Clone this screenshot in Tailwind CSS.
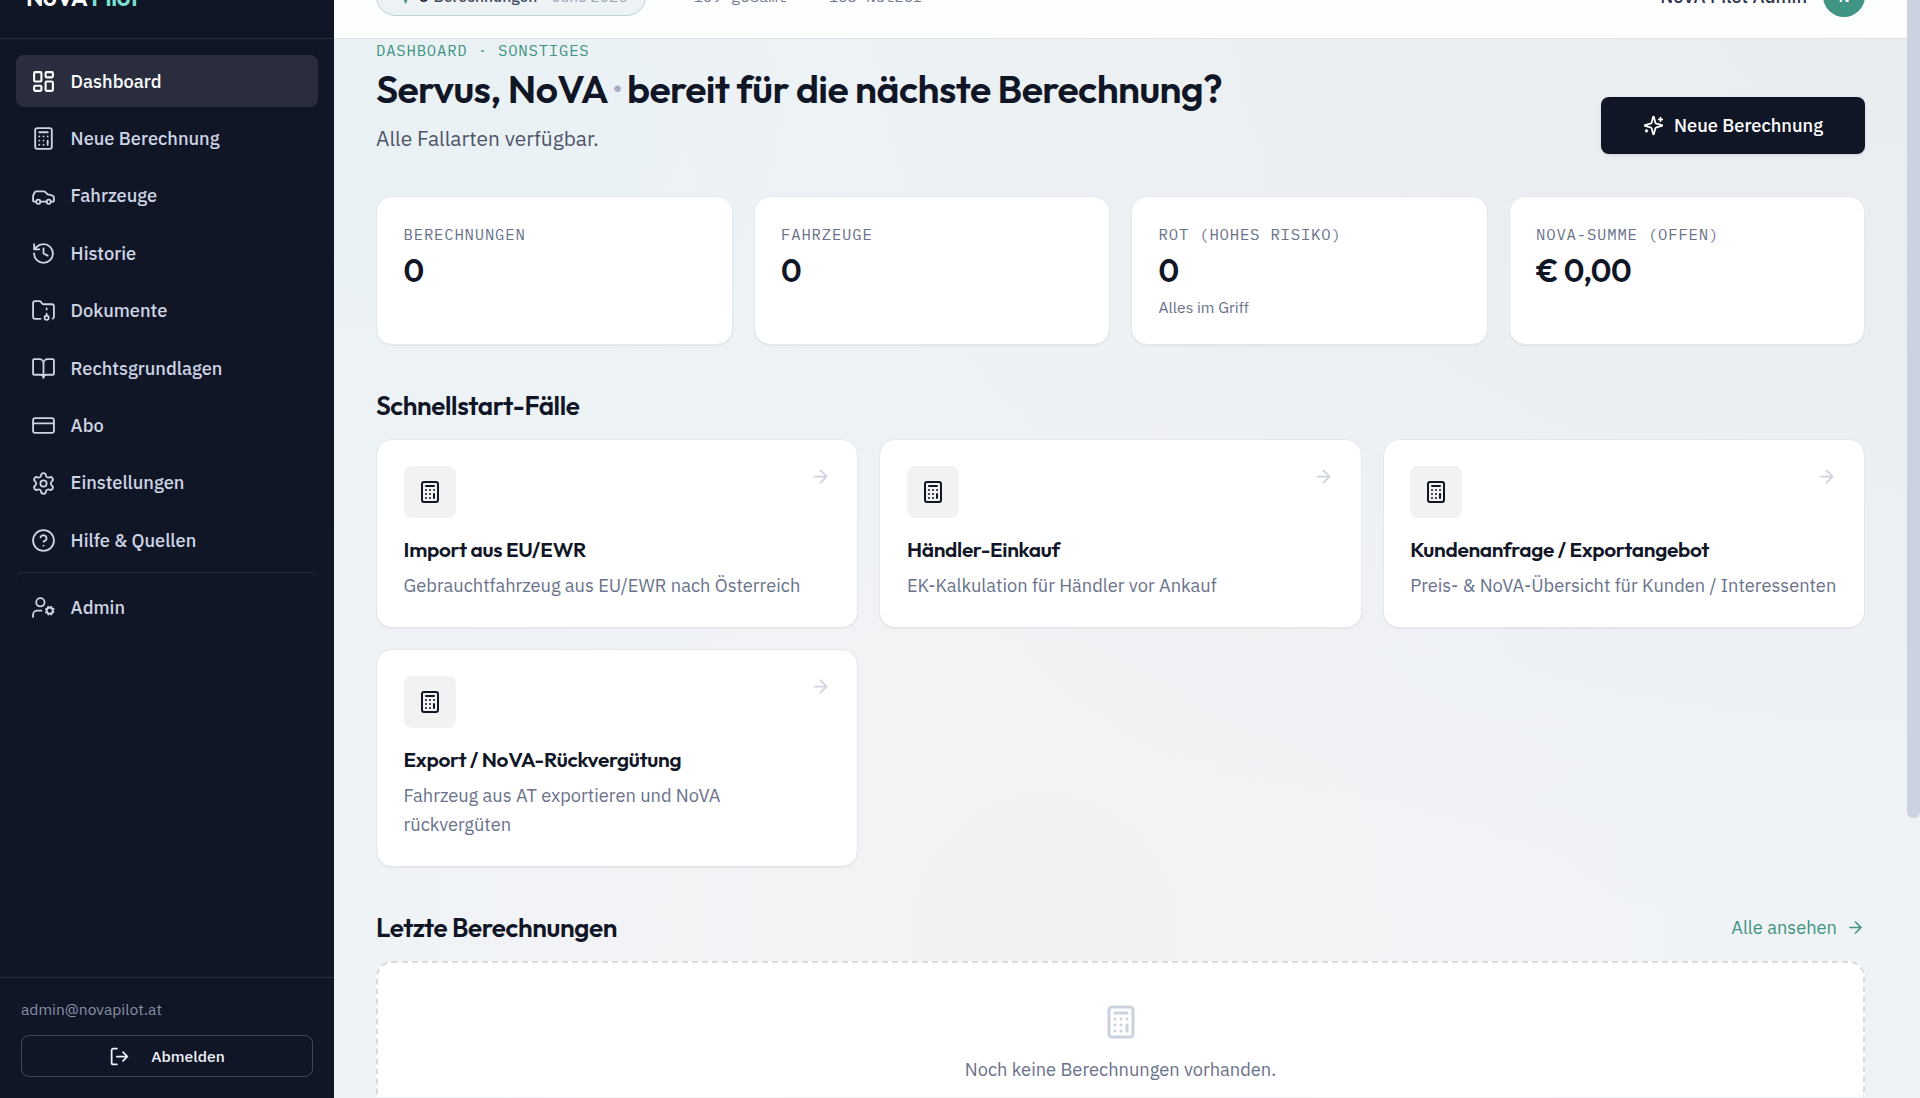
<!DOCTYPE html>
<html lang="de">
<head>
    <meta charset="UTF-8">
    <meta name="viewport" content="width=device-width, initial-scale=1.0">
    <title>Dashboard - NoVA Pilot</title>
    <script src="https://cdn.jsdelivr.net/npm/@tailwindcss/browser@4"></script>
</head>
<body class="h-screen overflow-hidden font-['IBM_Plex_Sans','Open_Sans',sans-serif] text-[18.28px] text-[#111627]">
    <!-- Icons -->
    <svg class="hidden">
        <symbol id="dashboard" viewBox="0 0 24 24"><rect width="7" height="9" x="3" y="3" rx="1"/><rect width="7" height="5" x="14" y="3" rx="1"/><rect width="7" height="9" x="14" y="12" rx="1"/><rect width="7" height="5" x="3" y="16" rx="1"/></symbol>
        <symbol id="calculator" viewBox="0 0 24 24"><rect width="16" height="20" x="4" y="2" rx="2"/><path d="M8 6h8M16 14v4M16 10h.01M12 10h.01M8 10h.01M12 14h.01M8 14h.01M12 18h.01M8 18h.01"/></symbol>
        <symbol id="car" viewBox="0 0 24 24"><path d="M19 17h2c.6 0 1-.4 1-1v-3c0-.9-.7-1.7-1.5-1.9C18.7 10.6 16 10 16 10s-1.3-1.4-2.2-2.3c-.5-.4-1.1-.7-1.8-.7H5c-.6 0-1.1.4-1.4.9l-1.4 2.9A3.7 3.7 0 0 0 2 12v4c0 .6.4 1 1 1h2M9 17h6"/><circle cx="7" cy="17" r="2"/><circle cx="17" cy="17" r="2"/></symbol>
        <symbol id="history" viewBox="0 0 24 24"><path d="M3 12a9 9 0 1 0 9-9 9.75 9.75 0 0 0-6.74 2.74L3 8M3 3v5h5M12 7v5l4 2"/></symbol>
        <symbol id="folder" viewBox="0 0 24 24"><circle cx="15" cy="19" r="2"/><path d="M20.9 19.8A2 2 0 0 0 22 18V8a2 2 0 0 0-2-2h-7.9a2 2 0 0 1-1.69-.9L9.6 3.9A2 2 0 0 0 7.93 3H4a2 2 0 0 0-2 2v13a2 2 0 0 0 2 2h5.1M15 11v-1M15 17v-2"/></symbol>
        <symbol id="book" viewBox="0 0 24 24"><path d="M12 7v14M3 18a1 1 0 0 1-1-1V4a1 1 0 0 1 1-1h5a4 4 0 0 1 4 4 4 4 0 0 1 4-4h5a1 1 0 0 1 1 1v13a1 1 0 0 1-1 1h-6a3 3 0 0 0-3 3 3 3 0 0 0-3-3z"/></symbol>
        <symbol id="card" viewBox="0 0 24 24"><rect width="20" height="14" x="2" y="5" rx="2"/><path d="M2 10h20"/></symbol>
        <symbol id="settings" viewBox="0 0 24 24"><path d="M9.671 4.136a2.34 2.34 0 0 1 4.659 0 2.34 2.34 0 0 0 3.319 1.915 2.34 2.34 0 0 1 2.33 4.033 2.34 2.34 0 0 0 0 3.831 2.34 2.34 0 0 1-2.33 4.033 2.34 2.34 0 0 0-3.319 1.915 2.34 2.34 0 0 1-4.659 0 2.34 2.34 0 0 0-3.32-1.915 2.34 2.34 0 0 1-2.33-4.033 2.34 2.34 0 0 0 0-3.831A2.34 2.34 0 0 1 6.35 6.051a2.34 2.34 0 0 0 3.319-1.915"/><circle cx="12" cy="12" r="3"/></symbol>
        <symbol id="help" viewBox="0 0 24 24"><circle cx="12" cy="12" r="10"/><path d="M9.09 9a3 3 0 0 1 5.83 1c0 2-3 3-3 3M12 17h.01"/></symbol>
        <symbol id="user-cog" viewBox="0 0 24 24"><path d="M10 15H6a4 4 0 0 0-4 4v2M21.7 16.4l-.9-.3M15.2 13.9l-.9-.3M16.6 18.7l.3-.9M19.1 12.2l.3-.9M19.6 18.7l-.4-1M16.8 12.3l-.4-1M14.3 16.6l1-.4M20.7 13.8l1-.4"/><circle cx="18" cy="15" r="3"/><circle cx="9" cy="7" r="4"/></symbol>
        <symbol id="logout" viewBox="0 0 24 24"><path d="m16 17 5-5-5-5M21 12H9M9 21H5a2 2 0 0 1-2-2V5a2 2 0 0 1 2-2h4"/></symbol>
        <symbol id="sparkles" viewBox="0 0 24 24"><path d="M9.937 15.5A2 2 0 0 0 8.5 14.063l-6.135-1.582a.5.5 0 0 1 0-.962L8.5 9.936A2 2 0 0 0 9.937 8.5l1.582-6.135a.5.5 0 0 1 .963 0L14.063 8.5A2 2 0 0 0 15.5 9.937l6.135 1.581a.5.5 0 0 1 0 .964L15.5 14.063a2 2 0 0 0-1.437 1.437l-1.582 6.135a.5.5 0 0 1-.963 0zM20 3v4M22 5h-4M4 17v2M5 18H3"/></symbol>
        <symbol id="arrow" viewBox="0 0 24 24"><path d="M5 12h14M12 5l7 7-7 7"/></symbol>
        <symbol id="activity" viewBox="0 0 24 24"><path d="M22 12h-4l-3 9L9 3l-3 9H2"/></symbol>
    </svg>

    <div class="flex h-full">
        <!-- Sidebar -->
        <aside class="flex w-[334px] shrink-0 flex-col bg-[#111627]">
            <div class="-mt-[46px] flex h-[85px] shrink-0 items-center border-b border-white/10 px-[26px] pt-[2px]">
                <span class="font-['Outfit',Lato,sans-serif] text-[24px] font-semibold tracking-[-0.015em] text-white">NoVA <span class="text-[#7ce0d0]">Pilot</span></span>
            </div>

            <nav class="flex flex-1 flex-col gap-[5.4px] px-4 pt-[16.3px] font-medium text-[#cdd4e3]">
                <a href="#" class="flex h-[52px] items-center gap-[14.6px] rounded-lg bg-white/10 px-[15px] text-white"><svg class="size-[25px] fill-none stroke-current stroke-2" stroke-linecap="round" stroke-linejoin="round"><use href="#dashboard"/></svg>Dashboard</a>
                <a href="#" class="flex h-[52px] items-center gap-[14.6px] rounded-lg px-[15px]"><svg class="size-[25px] fill-none stroke-current stroke-[1.75]" stroke-linecap="round" stroke-linejoin="round"><use href="#calculator"/></svg>Neue Berechnung</a>
                <a href="#" class="flex h-[52px] items-center gap-[14.6px] rounded-lg px-[15px]"><svg class="size-[25px] fill-none stroke-current stroke-[1.75]" stroke-linecap="round" stroke-linejoin="round"><use href="#car"/></svg>Fahrzeuge</a>
                <a href="#" class="flex h-[52px] items-center gap-[14.6px] rounded-lg px-[15px]"><svg class="size-[25px] fill-none stroke-current stroke-[1.75]" stroke-linecap="round" stroke-linejoin="round"><use href="#history"/></svg>Historie</a>
                <a href="#" class="flex h-[52px] items-center gap-[14.6px] rounded-lg px-[15px]"><svg class="size-[25px] fill-none stroke-current stroke-[1.75]" stroke-linecap="round" stroke-linejoin="round"><use href="#folder"/></svg>Dokumente</a>
                <a href="#" class="flex h-[52px] items-center gap-[14.6px] rounded-lg px-[15px]"><svg class="size-[25px] fill-none stroke-current stroke-[1.75]" stroke-linecap="round" stroke-linejoin="round"><use href="#book"/></svg>Rechtsgrundlagen</a>
                <a href="#" class="flex h-[52px] items-center gap-[14.6px] rounded-lg px-[15px]"><svg class="size-[25px] fill-none stroke-current stroke-[1.75]" stroke-linecap="round" stroke-linejoin="round"><use href="#card"/></svg>Abo</a>
                <a href="#" class="flex h-[52px] items-center gap-[14.6px] rounded-lg px-[15px]"><svg class="size-[25px] fill-none stroke-current stroke-[1.75]" stroke-linecap="round" stroke-linejoin="round"><use href="#settings"/></svg>Einstellungen</a>
                <a href="#" class="flex h-[52px] items-center gap-[14.6px] rounded-lg px-[15px]"><svg class="size-[25px] fill-none stroke-current stroke-[1.75]" stroke-linecap="round" stroke-linejoin="round"><use href="#help"/></svg>Hilfe &amp; Quellen</a>
                <a href="#" class="flex h-[61px] items-center gap-[14.6px] rounded-lg border-t border-white/10 px-[15px] pt-[9px]"><svg class="size-[25px] fill-none stroke-current stroke-[1.75]" stroke-linecap="round" stroke-linejoin="round"><use href="#user-cog"/></svg>Admin</a>
            </nav>

            <div class="h-[121px] border-t border-white/10 px-[21px] pt-[19px]">
                <p class="text-[15.65px] leading-[24px] text-[#8790a5]">admin@novapilot.at</p>
                <button class="mt-[14px] flex h-[42px] w-full items-center justify-center gap-[21px] rounded-lg border border-white/20 pt-px text-[15.65px] font-medium text-[#eef1f7]">
                    <svg class="size-[21px] fill-none stroke-current stroke-2" stroke-linecap="round" stroke-linejoin="round"><use href="#logout"/></svg>Abmelden
                </button>
            </div>
        </aside>

        <!-- Content column -->
        <div class="flex min-w-0 flex-1 flex-col bg-[#f0f3f6] bg-[radial-gradient(ellipse_at_0%_10%,#e9f1f4_0%,transparent_45%),radial-gradient(ellipse_at_100%_0%,#e8ecef_0%,transparent_60%),radial-gradient(ellipse_at_45%_85%,#f2f2f4_0%,transparent_55%)]">
            <header class="-mt-[46px] flex h-[85px] shrink-0 items-center justify-between border-b border-[#dfe4e8] bg-[#fdfefe] pr-[55px] pl-[42px]">
                <div class="flex items-center">
                    <div class="flex h-[39px] w-[270px] items-center rounded-full border border-[#b9d6d1] bg-[#edf3f4] pt-px pl-[18px] text-[15.65px] whitespace-nowrap">
                        <svg class="mr-[7px] size-[17px] fill-none stroke-[#3f9483] stroke-2" stroke-linecap="round" stroke-linejoin="round"><use href="#activity"/></svg>
                        <b class="mr-[5px] font-semibold">6</b><span class="font-medium text-[#454c62]">Berechnungen</span>
                        <span class="ml-[15px] text-[#9aa3b5]">June 2026</span>
                    </div>
                    <div class="flex items-center pt-[2px] font-['IBM_Plex_Mono','Liberation_Mono',monospace] text-[15.65px] whitespace-pre text-[#6f788e]"><span class="ml-[18px] text-[#b9c0cd]">·</span><span class="ml-[20px]">169 gesamt</span><span class="ml-[16px] text-[#b9c0cd]">·</span><span class="ml-[16px]">163 Nutzer</span></div>
                </div>
                <div class="flex items-center gap-4">
                    <span class="pt-px font-medium text-[#30364b]">NoVA Pilot Admin</span>
                    <span class="flex size-[42px] items-center justify-center rounded-full bg-[#3f9483] pt-px text-[15.65px] font-semibold text-white">N</span>
                </div>
            </header>

            <main class="flex flex-1 pl-[42px]">
                <div class="w-[1489px] shrink-0">
                    <div class="flex items-end justify-between">
                        <div>
                            <p class="font-['IBM_Plex_Mono','Liberation_Mono',monospace] text-[15.65px] leading-[22px] tracking-wider text-[#3f9483]">DASHBOARD · SONSTIGES</p>
                            <h1 class="mt-[5px] font-['Outfit',Lato,sans-serif] text-[39.15px] leading-[45px] font-semibold tracking-[-0.015em]">Servus, NoVA<span class="mr-[7px] ml-[6px] text-[#a6abc4]">·</span>bereit für die nächste Berechnung?</h1>
                            <p class="mt-[12px] text-[20.9px] leading-[31px] text-[#4d546a]">Alle Fallarten verfügbar.</p>
                        </div>
                        <button class="flex h-[57px] w-[264px] items-center justify-center gap-[10px] rounded-lg bg-[#111627] font-medium text-white shadow-sm">
                            <svg class="size-[21px] fill-none stroke-current stroke-2" stroke-linecap="round" stroke-linejoin="round"><use href="#sparkles"/></svg>Neue Berechnung
                        </button>
                    </div>

                    <!-- Key figures -->
                    <div class="mt-[42px] grid grid-cols-4 gap-[21px]">
                        <div class="h-[149px] rounded-2xl border border-[#e4e7ed] bg-white px-[26.6px] pt-[26px] shadow-2xs">
                            <p class="font-['IBM_Plex_Mono','Liberation_Mono',monospace] text-[15.65px] leading-[22px] tracking-wider text-[#69728a]">BERECHNUNGEN</p>
                            <p class="mt-[5px] font-['Outfit',Lato,sans-serif] text-[31.25px] leading-[42px] font-semibold tracking-[-0.015em]">0</p>
                        </div>
                        <div class="h-[149px] rounded-2xl border border-[#e4e7ed] bg-white px-[26.6px] pt-[26px] shadow-2xs">
                            <p class="font-['IBM_Plex_Mono','Liberation_Mono',monospace] text-[15.65px] leading-[22px] tracking-wider text-[#69728a]">FAHRZEUGE</p>
                            <p class="mt-[5px] font-['Outfit',Lato,sans-serif] text-[31.25px] leading-[42px] font-semibold tracking-[-0.015em]">0</p>
                        </div>
                        <div class="h-[149px] rounded-2xl border border-[#e4e7ed] bg-white px-[26.6px] pt-[26px] shadow-2xs">
                            <p class="font-['IBM_Plex_Mono','Liberation_Mono',monospace] text-[15.65px] leading-[22px] tracking-wider text-[#69728a]">ROT (HOHES RISIKO)</p>
                            <p class="mt-[5px] font-['Outfit',Lato,sans-serif] text-[31.25px] leading-[42px] font-semibold tracking-[-0.015em]">0</p>
                            <p class="mt-1 text-[15.65px] leading-[22px] text-[#69728a]">Alles im Griff</p>
                        </div>
                        <div class="h-[149px] rounded-2xl border border-[#e4e7ed] bg-white px-[26.6px] pt-[26px] shadow-2xs">
                            <p class="font-['IBM_Plex_Mono','Liberation_Mono',monospace] text-[15.65px] leading-[22px] tracking-wider text-[#69728a]">NOVA-SUMME (OFFEN)</p>
                            <p class="mt-[5px] font-['Outfit',Lato,sans-serif] text-[31.25px] leading-[42px] font-semibold tracking-[-0.015em]">€ 0,00</p>
                        </div>
                    </div>

                    <!-- Quick start -->
                    <h2 class="mt-[43px] font-['Outfit',Lato,sans-serif] text-[26.1px] leading-[36px] font-semibold tracking-[-0.015em]">Schnellstart-Fälle</h2>
                    <div class="mt-[15px] grid grid-cols-3 gap-[21px]">
                        <a href="#" class="h-[189px] rounded-2xl border border-[#e4e7ed] bg-white px-[26.6px] pt-[26px] shadow-2xs">
                            <div class="flex items-start justify-between">
                                <span class="flex size-[52px] items-center justify-center rounded-lg bg-[#f2f2f3]"><svg class="size-6 fill-none stroke-current stroke-2" stroke-linecap="round" stroke-linejoin="round"><use href="#calculator"/></svg></span>
                                <svg class="size-[21px] fill-none stroke-[#cdd2dc] stroke-2" stroke-linecap="round" stroke-linejoin="round"><use href="#arrow"/></svg>
                            </div>
                            <h3 class="mt-[17px] font-['Outfit',Lato,sans-serif] text-[20.9px] leading-[29px] font-semibold tracking-[-0.015em]">Import aus EU/EWR</h3>
                            <p class="mt-[7px] leading-[29.4px] text-[#69728a]">Gebrauchtfahrzeug aus EU/EWR nach Österreich</p>
                        </a>
                        <a href="#" class="h-[189px] rounded-2xl border border-[#e4e7ed] bg-white px-[26.6px] pt-[26px] shadow-2xs">
                            <div class="flex items-start justify-between">
                                <span class="flex size-[52px] items-center justify-center rounded-lg bg-[#f2f2f3]"><svg class="size-6 fill-none stroke-current stroke-2" stroke-linecap="round" stroke-linejoin="round"><use href="#calculator"/></svg></span>
                                <svg class="size-[21px] fill-none stroke-[#cdd2dc] stroke-2" stroke-linecap="round" stroke-linejoin="round"><use href="#arrow"/></svg>
                            </div>
                            <h3 class="mt-[17px] font-['Outfit',Lato,sans-serif] text-[20.9px] leading-[29px] font-semibold tracking-[-0.015em]">Händler-Einkauf</h3>
                            <p class="mt-[7px] leading-[29.4px] text-[#69728a]">EK-Kalkulation für Händler vor Ankauf</p>
                        </a>
                        <a href="#" class="h-[189px] rounded-2xl border border-[#e4e7ed] bg-white px-[26.6px] pt-[26px] shadow-2xs">
                            <div class="flex items-start justify-between">
                                <span class="flex size-[52px] items-center justify-center rounded-lg bg-[#f2f2f3]"><svg class="size-6 fill-none stroke-current stroke-2" stroke-linecap="round" stroke-linejoin="round"><use href="#calculator"/></svg></span>
                                <svg class="size-[21px] fill-none stroke-[#cdd2dc] stroke-2" stroke-linecap="round" stroke-linejoin="round"><use href="#arrow"/></svg>
                            </div>
                            <h3 class="mt-[17px] font-['Outfit',Lato,sans-serif] text-[20.9px] leading-[29px] font-semibold tracking-[-0.015em]">Kundenanfrage / Exportangebot</h3>
                            <p class="mt-[7px] leading-[29.4px] whitespace-nowrap text-[#69728a]">Preis- &amp; NoVA-Übersicht für Kunden / Interessenten</p>
                        </a>
                        <a href="#" class="h-[218px] rounded-2xl border border-[#e4e7ed] bg-white px-[26.6px] pt-[26px] shadow-2xs">
                            <div class="flex items-start justify-between">
                                <span class="flex size-[52px] items-center justify-center rounded-lg bg-[#f2f2f3]"><svg class="size-6 fill-none stroke-current stroke-2" stroke-linecap="round" stroke-linejoin="round"><use href="#calculator"/></svg></span>
                                <svg class="size-[21px] fill-none stroke-[#cdd2dc] stroke-2" stroke-linecap="round" stroke-linejoin="round"><use href="#arrow"/></svg>
                            </div>
                            <h3 class="mt-[17px] font-['Outfit',Lato,sans-serif] text-[20.9px] leading-[29px] font-semibold tracking-[-0.015em]">Export / NoVA-Rückvergütung</h3>
                            <p class="mt-[7px] leading-[29.4px] text-[#69728a]">Fahrzeug aus AT exportieren und NoVA<br>rückvergüten</p>
                        </a>
                    </div>

                    <!-- Latest calculations -->
                    <div class="mt-[43px] flex items-center justify-between">
                        <h2 class="font-['Outfit',Lato,sans-serif] text-[26.1px] leading-[36px] font-semibold tracking-[-0.015em]">Letzte Berechnungen</h2>
                        <a href="#" class="flex items-center gap-[9px] text-[#3f9483]">Alle ansehen<svg class="size-[19px] fill-none stroke-current stroke-2" stroke-linecap="round" stroke-linejoin="round"><use href="#arrow"/></svg></a>
                    </div>
                    <div class="mt-[15px] h-[136px] rounded-t-2xl border-2 border-b-0 border-dashed border-[#d6dae2] bg-white pt-[41px]">
                        <div class="flex flex-col items-center">
                            <svg class="size-9 fill-none stroke-[#cbd2df] stroke-2" stroke-linecap="round" stroke-linejoin="round"><use href="#calculator"/></svg>
                            <p class="mt-[15px] leading-[29px] text-[#69728a]">Noch keine Berechnungen vorhanden.</p>
                        </div>
                    </div>
                </div>
            </main>
        </div>
    </div>

    <!-- Scrollbar thumb -->
    <div class="absolute top-0 right-0 h-[818px] w-[13px] rounded-b-md bg-[#cbd3e0]"></div>
</body>
</html>
